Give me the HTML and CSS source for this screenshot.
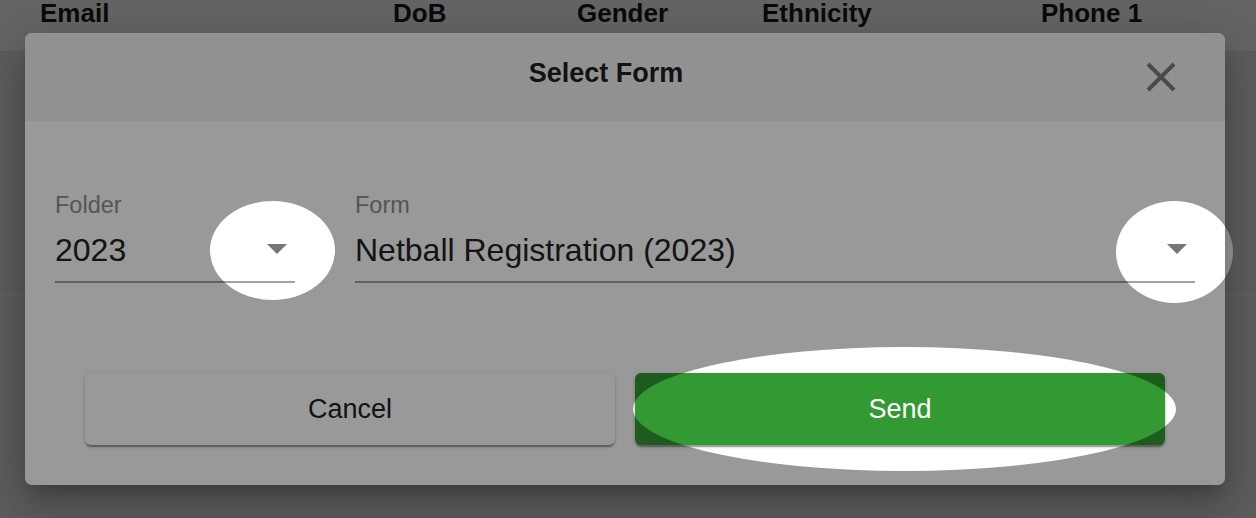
FILE: index.html
```html
<!DOCTYPE html>
<html>
<head>
<meta charset="utf-8">
<link rel="stylesheet" href="styles.css">
</head>
<body>
<div class="page">
  <div class="thead">
    <div class="th">Email</div>
    <div class="th">DoB</div>
    <div class="th">Gender</div>
    <div class="th">Ethnicity</div>
    <div class="th">Phone 1</div>
  </div>
  <div class="trow"></div>
  <div class="trow"></div>
</div>
<div class="backdrop"></div>
<div class="dialog">
  <div class="dlg-head">
    <div class="dlg-title">Select Form</div>
    <button class="close" aria-label="Close">
      <svg viewBox="0 0 30 30" width="30" height="30"><path d="M2 2 L28 28 M28 2 L2 28" stroke="currentColor" stroke-width="4" fill="none"/></svg>
    </button>
  </div>
  <div class="dlg-body">
    <div class="fields">
      <div class="field folder">
        <div class="label">Folder</div>
        <div class="select">
          <span class="value">2023</span>
          <span class="arrow"></span>
        </div>
      </div>
      <div class="field form">
        <div class="label">Form</div>
        <div class="select">
          <span class="value">Netball Registration (2023)</span>
          <span class="arrow"></span>
        </div>
      </div>
    </div>
    <div class="actions">
      <button class="btn cancel">Cancel</button>
      <button class="btn send">Send</button>
    </div>
  </div>
</div>
<svg class="spotlight" width="1256" height="518" viewBox="0 0 1256 518">
  <defs>
    <mask id="holes">
      <rect x="0" y="0" width="1256" height="518" fill="#fff"/>
      <ellipse cx="272.5" cy="250.5" rx="62.5" ry="49.5" fill="#000"/>
      <ellipse cx="1174.5" cy="252" rx="58.5" ry="51" fill="#000"/>
      <ellipse cx="904.5" cy="409" rx="271.5" ry="62" fill="#000"/>
    </mask>
  </defs>
  <rect x="0" y="0" width="1256" height="518" fill="#000" fill-opacity="0.4" mask="url(#holes)"/>
</svg>
</body>
</html>
```
FILE: styles.css
```css
* { box-sizing: border-box; }
html, body {
  margin: 0;
  padding: 0;
  width: 1256px;
  height: 518px;
  overflow: hidden;
  font-family: "Liberation Sans", Arial, sans-serif;
  background: #eeeeee;
}
.page {
  width: 1256px;
  height: 518px;
  background: #ececec;
}
.thead {
  display: grid;
  grid-template-columns: 353px 184px 185px 279px 1fr;
  padding-left: 40px;
  height: 52px;
  background: #ffffff;
  border-bottom: 1px solid #e4e4e4;
}
.th {
  font-weight: bold;
  font-size: 26px;
  line-height: 27px;
  color: #1a1a1a;
}
.trow {
  height: 244px;
  border-bottom: 2px solid #f6f6f6;
}
.backdrop {
  position: absolute;
  inset: 0;
  background: rgba(0, 0, 0, 0.34);
}
.dialog {
  position: absolute;
  left: 25px;
  top: 33px;
  width: 1200px;
  height: 452px;
  background: #ffffff;
  border-radius: 7px;
  overflow: hidden;
  display: flex;
  flex-direction: column;
  box-shadow: 0 11px 15px -7px rgba(0,0,0,.2), 0 24px 38px 3px rgba(0,0,0,.14), 0 9px 46px 8px rgba(0,0,0,.12);
}
.dlg-head {
  height: 88px;
  flex: none;
  background: #f2f2f2;
  display: flex;
  align-items: center;
  padding: 0 49px 0 41px;
}
.dlg-title {
  flex: 1;
  text-align: center;
  font-weight: bold;
  font-size: 27px;
  line-height: 31px;
  color: #1e1e1e;
  padding-bottom: 8px;
}
.close {
  width: 30px;
  height: 30px;
  padding: 0;
  border: 0;
  background: none;
  color: #7c7c7c;
  display: flex;
}
.dlg-body {
  flex: 1;
  padding: 71px 30px 40px;
  display: flex;
  flex-direction: column;
}
.fields {
  display: flex;
  gap: 60px;
}
.field.folder { width: 240px; }
.field.form { flex: 1; }
.label {
  font-size: 23.5px;
  line-height: 27px;
  color: #8e8e8e;
}
.select {
  margin-top: 13px;
  display: flex;
  align-items: center;
  justify-content: space-between;
  padding-bottom: 12px;
  border-bottom: 2px solid #a2a2a2;
}
.value {
  font-size: 32px;
  line-height: 37px;
  color: #222222;
}
.arrow {
  width: 0;
  height: 0;
  border-left: 10px solid transparent;
  border-right: 10px solid transparent;
  border-top: 10px solid #767676;
  margin-right: 8px;
  margin-top: -4px;
}
.actions {
  margin-top: 90px;
  display: flex;
  gap: 20px;
  padding: 0 30px;
}
.btn {
  flex: 1;
  height: 72px;
  border: 0;
  border-radius: 6px;
  font-family: "Liberation Sans", Arial, sans-serif;
  font-size: 27px;
}
.cancel {
  background: #ffffff;
  color: #222222;
  box-shadow: 0 3px 1px -1px rgba(0,0,0,.25), 0 2px 3px 0 rgba(0,0,0,.16), 0 1px 5px 0 rgba(0,0,0,.12);
}
.send {
  background: #339933;
  color: #ffffff;
  box-shadow: 0 3px 1px -1px rgba(0,0,0,.25), 0 2px 3px 0 rgba(0,0,0,.16), 0 1px 5px 0 rgba(0,0,0,.12);
}
.spotlight {
  position: absolute;
  left: 0;
  top: 0;
  pointer-events: none;
}
```
